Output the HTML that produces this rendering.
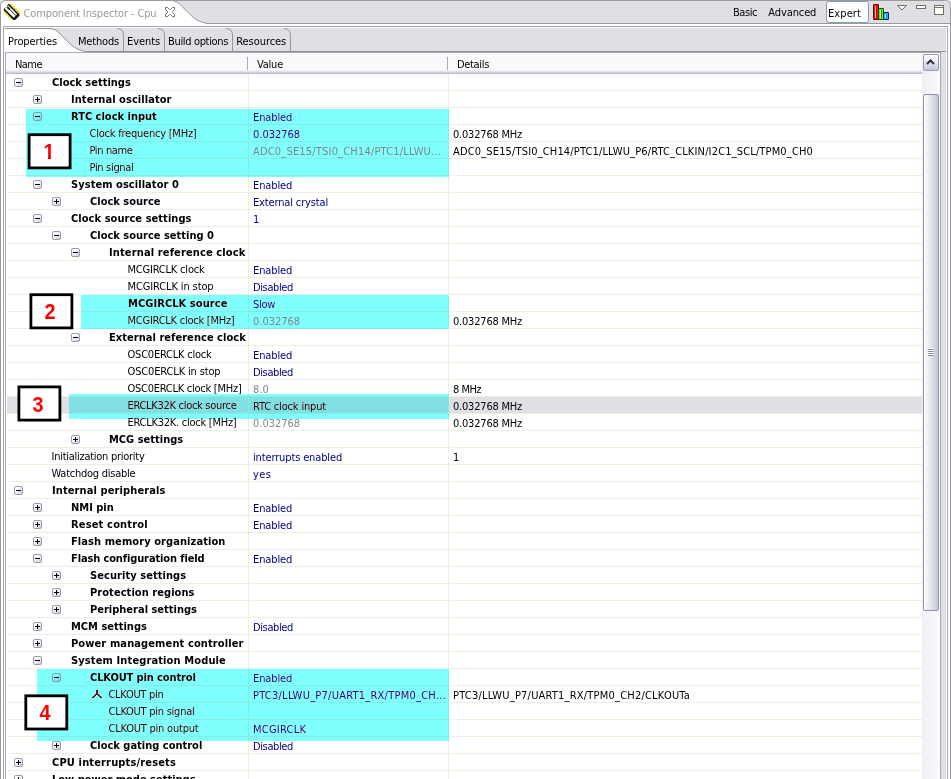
<!DOCTYPE html><html><head><meta charset="utf-8"><title>Component Inspector - Cpu</title><style>
*{margin:0;padding:0;box-sizing:border-box}
html,body{width:951px;height:779px;overflow:hidden;background:#fff}
body{position:relative;font-family:"DejaVu Sans Condensed","Liberation Sans",sans-serif;font-size:11px;color:#000;-webkit-font-smoothing:antialiased}
.a{position:absolute}
.t{position:absolute;white-space:nowrap;line-height:17px;height:17px}
.b{font-weight:bold}
.v{color:#000080}
.g{color:#868686}
.k{color:#000}
.hl{position:absolute;left:7px;width:915px;height:1px;background:#f0eee1}
.ex{position:absolute;width:9px;height:9px;border:1px solid #9a9bab;border-radius:2px;background:linear-gradient(135deg,#fff 30%,#c3cedb 100%)}
.ex i{position:absolute;left:1px;top:3px;width:5px;height:1px;background:#000}
.ex b{position:absolute;left:3px;top:1px;width:1px;height:5px;background:#000}
.cy{position:absolute;background:#80ffff;mix-blend-mode:darken}
.nb{position:absolute;width:44px;height:36px;padding:3px;color:#f00;font:bold 22px/31px "Liberation Sans",sans-serif;text-align:center}
.nb span{display:inline-block;transform:scaleX(.9);margin-left:-2px}
</style></head><body>
<svg class="a" style="left:0;top:0" width="951" height="779" viewBox="0 0 951 779">
<rect x="0" y="0" width="951" height="30" fill="#e3e3e7"/>
<path d="M0.5,800 V6.5 Q0.5,0.5 6.5,0.5 H944.5 Q950.5,0.5 950.5,6.5 V800 Z" fill="#fff" stroke="#9a9a9e"/>
<path d="M171,1 C175,0.8 177,1.8 179,3.5 L193,17.3 C197,20.5 201,22.3 207,23.5 H950 V7 Q950,1 944,1 Z" fill="#e0dfe3"/>
<path d="M171,0.5 C175,0.8 177,1.8 179,3.5 L193,17.3 C197,20.5 201,22.3 207,23.5 H950" fill="none" stroke="#9a9a9e"/>
<!-- inner folder border -->
<path d="M3.5,800 V26.5 H947.5 V800" fill="none" stroke="#a3a7ab"/>
<!-- tab strip background -->
<rect x="5" y="28" width="941" height="24" fill="#e0dfe3"/>
<rect x="941" y="52" width="5" height="727" fill="#e0dfe3"/>
<!-- selected tab -->
<path d="M5,28.5 H49.5 C53.5,28.8 55.5,29.8 57.5,31.5 L71.5,45.3 C75.5,48.5 79.5,50.3 85.5,51.5 V52 H5 Z" fill="#fff"/>
<path d="M5,28.5 H49.5 C53.5,28.8 55.5,29.8 57.5,31.5 L71.5,45.3 C75.5,48.5 79.5,50.3 85.5,51.5 H946" fill="none" stroke="#8f8f93"/>
<!-- unselected tab separators -->
<g fill="none" stroke="#98989c">
<path d="M117,28.5 Q123.5,29 123.5,35 V51"/>
<path d="M158,28.5 Q164.500,29 164.500,35 V51"/>
<path d="M226,28.5 Q232.500,29 232.500,35 V51"/>
<path d="M284,28.5 Q290.500,29 290.500,35 V51"/>
</g>
<!-- close X -->
<polygon transform="translate(165.5,7.500)" points="0,0 2,0 4,2 5,2 7,0 9,0 9,2 7,4 7,5 9,7 9,9 7,9 5,7 4,7 2,9 0,9 0,7 2,5 2,4 0,2" fill="#fff" stroke="#716f64"/>
<!-- view menu / min / max -->
<g fill="#fff" stroke="#716f64">
<path d="M897.5,5.500 H906.5 L902,10 Z"/>
<rect x="916.5" y="5.500" width="9" height="3"/>
<rect x="934.5" y="5.500" width="9" height="9"/>
<path d="M935,7.500 H943"/>
</g>
<!-- chart icon -->
<g>
<rect x="873" y="4" width="6" height="16" rx="1.200" fill="#780000"/><rect x="874" y="5" width="4" height="14" fill="#ff1010"/><rect x="875" y="6" width="1" height="12" fill="#ffc8c8"/><rect x="876" y="6" width="1" height="12" fill="#d80000"/>
<rect x="878" y="8" width="6" height="12" rx="1.200" fill="#0a4800"/><rect x="879" y="9" width="4" height="10" fill="#58f800"/><rect x="880" y="10" width="1" height="8" fill="#c8ffb0"/><rect x="881" y="10" width="1" height="8" fill="#10a000"/>
<rect x="883" y="12" width="6" height="8" rx="1.200" fill="#003058"/><rect x="884" y="13" width="4" height="6" fill="#28a8ff"/><rect x="885" y="14" width="1" height="4" fill="#c0e8ff"/><rect x="886" y="14" width="1" height="4" fill="#1088e8"/>
</g>
<!-- chip icon -->
<g>
<g fill="#e0e000">
<rect x="10" y="4" width="2.500" height="2"/><rect x="12" y="6" width="2.500" height="2"/><rect x="14" y="8" width="2.500" height="2"/><rect x="16" y="10" width="2.500" height="2"/><rect x="18" y="12" width="2.200" height="2"/>
<rect x="4" y="10" width="1.600" height="3.500"/><rect x="6" y="12" width="1.600" height="3.500"/><rect x="8" y="14" width="1.600" height="3.500"/><rect x="10" y="16" width="1.600" height="3.300"/><rect x="12" y="17.500" width="1.600" height="2.500"/>
</g>
<path d="M8.500,4.500 L19,15 L14.500,19.500 L4,9 Z" fill="#fff"/>
<path d="M4.300,8.800 L8.600,4.500" fill="none" stroke="#333" stroke-width="1" stroke-dasharray="1.200 0.800"/>
<path d="M8.300,4.300 L19,15" fill="none" stroke="#000" stroke-width="1.400"/>
<path d="M4,9.300 L14.300,19.600" fill="none" stroke="#05050f" stroke-width="1.600"/>
<path d="M14,19.300 L18.800,14.500" fill="none" stroke="#16161e" stroke-width="2.600"/>
<path d="M7.300,7 L9.800,9.500" fill="none" stroke="#222" stroke-width="1.800"/>
<path d="M9.500,9.200 L16,15.700" fill="none" stroke="#000" stroke-width="0.900"/>
</g>
</svg>
<div class="t" style="left:23.5px;top:5px;letter-spacing:-0.124px;color:#9a9a9a">Component Inspector - Cpu</div>
<div class="t" style="left:733px;top:4px;letter-spacing:-0.441px">Basic</div>
<div class="t" style="left:768.3px;top:4px;letter-spacing:-0.109px">Advanced</div>
<div class="a" style="left:826px;top:1px;width:43px;height:22px;border:1px solid #869cb2;border-radius:3px;background:#fff"></div>
<div class="t" style="left:828px;top:5px;letter-spacing:0.094px">Expert</div>
<div class="t" style="left:8px;top:33px;letter-spacing:-0.097px">Properties</div>
<div class="t" style="left:78px;top:33px;letter-spacing:-0.183px">Methods</div>
<div class="t" style="left:127px;top:33px;letter-spacing:-0.086px">Events</div>
<div class="t" style="left:168px;top:33px;letter-spacing:-0.341px">Build options</div>
<div class="t" style="left:236.2px;top:33px;letter-spacing:-0.052px">Resources</div>
<div class="a" style="left:5px;top:52px;width:936px;height:740px;border:1px solid #a5acb5;border-bottom:0"></div>
<div class="a" style="left:6px;top:53px;width:916px;height:21px;background:linear-gradient(#fafafd 0,#fafafd 17px,#f0f0f6 17px,#f0f0f6 18px,#e3e3ec 18px,#e3e3ec 19px,#d0d0de 19px,#d0d0de 20px,#bcbcd0 20px)"></div>
<div class="a" style="left:247px;top:57px;width:1px;height:13px;background:#a9a9b9"></div>
<div class="a" style="left:447px;top:57px;width:1px;height:13px;background:#a9a9b9"></div>
<div class="t" style="left:15px;top:56px;letter-spacing:-0.551px">Name</div>
<div class="t" style="left:257px;top:56px;letter-spacing:-0.219px">Value</div>
<div class="t" style="left:457px;top:56px;letter-spacing:-0.330px">Details</div>
<div class="a" style="left:7px;top:397px;width:915px;height:17px;background:#e0dfe3"></div>
<div class="hl" style="top:90px"></div>
<div class="hl" style="top:107px"></div>
<div class="hl" style="top:124px"></div>
<div class="hl" style="top:141px"></div>
<div class="hl" style="top:158px"></div>
<div class="hl" style="top:175px"></div>
<div class="hl" style="top:192px"></div>
<div class="hl" style="top:209px"></div>
<div class="hl" style="top:226px"></div>
<div class="hl" style="top:243px"></div>
<div class="hl" style="top:260px"></div>
<div class="hl" style="top:277px"></div>
<div class="hl" style="top:294px"></div>
<div class="hl" style="top:311px"></div>
<div class="hl" style="top:328px"></div>
<div class="hl" style="top:345px"></div>
<div class="hl" style="top:362px"></div>
<div class="hl" style="top:379px"></div>
<div class="hl" style="top:396px"></div>
<div class="hl" style="top:413px"></div>
<div class="hl" style="top:430px"></div>
<div class="hl" style="top:447px"></div>
<div class="hl" style="top:464px"></div>
<div class="hl" style="top:481px"></div>
<div class="hl" style="top:498px"></div>
<div class="hl" style="top:515px"></div>
<div class="hl" style="top:532px"></div>
<div class="hl" style="top:549px"></div>
<div class="hl" style="top:566px"></div>
<div class="hl" style="top:583px"></div>
<div class="hl" style="top:600px"></div>
<div class="hl" style="top:617px"></div>
<div class="hl" style="top:634px"></div>
<div class="hl" style="top:651px"></div>
<div class="hl" style="top:668px"></div>
<div class="hl" style="top:685px"></div>
<div class="hl" style="top:702px"></div>
<div class="hl" style="top:719px"></div>
<div class="hl" style="top:736px"></div>
<div class="hl" style="top:753px"></div>
<div class="hl" style="top:770px"></div>
<div class="a" style="left:248px;top:74px;width:1px;height:705px;background:#f0eee1"></div>
<div class="a" style="left:448px;top:74px;width:1px;height:705px;background:#f0eee1"></div>
<div class="ex" style="left:14px;top:78px"><i></i></div>
<div class="t b" style="left:52px;top:74px">Clock settings</div>
<div class="ex" style="left:33px;top:95px"><i></i><b></b></div>
<div class="t b" style="left:71px;top:91px;letter-spacing:0.056px">Internal oscillator</div>
<div class="ex" style="left:33px;top:112px"><i></i></div>
<div class="t b" style="left:71px;top:108px">RTC clock input</div>
<div class="t v" style="left:253px;top:109px;letter-spacing:-0.119px">Enabled</div>
<div class="t" style="left:89.5px;top:125px;letter-spacing:-0.223px">Clock frequency [MHz]</div>
<div class="t v" style="left:253px;top:126px;letter-spacing:-0.009px">0.032768</div>
<div class="t" style="left:453px;top:126px;letter-spacing:-0.203px">0.032768 MHz</div>
<div class="t" style="left:89.5px;top:142px;letter-spacing:-0.371px">Pin name</div>
<div class="t g" style="left:253px;top:143px;letter-spacing:0.183px">ADC0_SE15/TSI0_CH14/PTC1/LLWU...</div>
<div class="t" style="left:453px;top:143px;letter-spacing:0.150px">ADC0_SE15/TSI0_CH14/PTC1/LLWU_P6/RTC_CLKIN/I2C1_SCL/TPM0_CH0</div>
<div class="t" style="left:89.5px;top:159px;letter-spacing:-0.317px">Pin signal</div>
<div class="ex" style="left:33px;top:180px"><i></i></div>
<div class="t b" style="left:71px;top:176px;letter-spacing:0.056px">System oscillator 0</div>
<div class="t v" style="left:253px;top:177px;letter-spacing:-0.119px">Enabled</div>
<div class="ex" style="left:52px;top:197px"><i></i><b></b></div>
<div class="t b" style="left:90px;top:193px">Clock source</div>
<div class="t v" style="left:253px;top:194px;letter-spacing:-0.145px">External crystal</div>
<div class="ex" style="left:33px;top:214px"><i></i></div>
<div class="t b" style="left:71px;top:210px;letter-spacing:0.050px">Clock source settings</div>
<div class="t v" style="left:253px;top:211px;letter-spacing:1.703px">1</div>
<div class="ex" style="left:52px;top:231px"><i></i></div>
<div class="t b" style="left:90px;top:227px">Clock source setting 0</div>
<div class="ex" style="left:71px;top:248px"><i></i></div>
<div class="t b" style="left:109px;top:244px;letter-spacing:0.130px">Internal reference clock</div>
<div class="t" style="left:127.5px;top:261px;letter-spacing:-0.203px">MCGIRCLK clock</div>
<div class="t v" style="left:253px;top:262px;letter-spacing:-0.119px">Enabled</div>
<div class="t" style="left:127.5px;top:278px;letter-spacing:-0.123px">MCGIRCLK in stop</div>
<div class="t v" style="left:253px;top:279px;letter-spacing:-0.377px">Disabled</div>
<div class="t b" style="left:128px;top:295px;letter-spacing:0.071px">MCGIRCLK source</div>
<div class="t v" style="left:253px;top:296px;letter-spacing:-0.297px">Slow</div>
<div class="t" style="left:127.5px;top:312px;letter-spacing:-0.245px">MCGIRCLK clock [MHz]</div>
<div class="t g" style="left:253px;top:313px;letter-spacing:-0.009px">0.032768</div>
<div class="t" style="left:453px;top:313px;letter-spacing:-0.203px">0.032768 MHz</div>
<div class="ex" style="left:71px;top:333px"><i></i></div>
<div class="t b" style="left:109px;top:329px;letter-spacing:0.043px">External reference clock</div>
<div class="t" style="left:127.5px;top:346px;letter-spacing:-0.223px">OSC0ERCLK clock</div>
<div class="t v" style="left:253px;top:347px;letter-spacing:-0.119px">Enabled</div>
<div class="t" style="left:127.5px;top:363px;letter-spacing:-0.144px">OSC0ERCLK in stop</div>
<div class="t v" style="left:253px;top:364px;letter-spacing:-0.377px">Disabled</div>
<div class="t" style="left:127.5px;top:380px;letter-spacing:-0.256px">OSC0ERCLK clock [MHz]</div>
<div class="t g" style="left:253px;top:381px;letter-spacing:0.089px">8.0</div>
<div class="t" style="left:453px;top:381px;letter-spacing:-0.525px">8 MHz</div>
<div class="t" style="left:127.5px;top:397px;letter-spacing:-0.293px">ERCLK32K clock source</div>
<div class="t k" style="left:253px;top:398px;letter-spacing:-0.170px">RTC clock input</div>
<div class="t" style="left:453px;top:398px;letter-spacing:-0.203px">0.032768 MHz</div>
<div class="t" style="left:127.5px;top:414px;letter-spacing:-0.254px">ERCLK32K. clock [MHz]</div>
<div class="t g" style="left:253px;top:415px;letter-spacing:-0.009px">0.032768</div>
<div class="t" style="left:453px;top:415px;letter-spacing:-0.203px">0.032768 MHz</div>
<div class="ex" style="left:71px;top:435px"><i></i><b></b></div>
<div class="t b" style="left:109px;top:431px">MCG settings</div>
<div class="t" style="left:51.5px;top:448px;letter-spacing:-0.270px">Initialization priority</div>
<div class="t v" style="left:253px;top:449px;letter-spacing:-0.136px">interrupts enabled</div>
<div class="t" style="left:453px;top:449px;letter-spacing:1.703px">1</div>
<div class="t" style="left:51.5px;top:465px;letter-spacing:-0.247px">Watchdog disable</div>
<div class="t v" style="left:253px;top:466px;letter-spacing:0.464px">yes</div>
<div class="ex" style="left:14px;top:486px"><i></i></div>
<div class="t b" style="left:52px;top:482px;letter-spacing:0.105px">Internal peripherals</div>
<div class="ex" style="left:33px;top:503px"><i></i><b></b></div>
<div class="t b" style="left:71px;top:499px">NMI pin</div>
<div class="t v" style="left:253px;top:500px;letter-spacing:-0.119px">Enabled</div>
<div class="ex" style="left:33px;top:520px"><i></i><b></b></div>
<div class="t b" style="left:71px;top:516px;letter-spacing:0.167px">Reset control</div>
<div class="t v" style="left:253px;top:517px;letter-spacing:-0.119px">Enabled</div>
<div class="ex" style="left:33px;top:537px"><i></i><b></b></div>
<div class="t b" style="left:71px;top:533px;letter-spacing:0.083px">Flash memory organization</div>
<div class="ex" style="left:33px;top:554px"><i></i></div>
<div class="t b" style="left:71px;top:550px;letter-spacing:-0.125px">Flash configuration field</div>
<div class="t v" style="left:253px;top:551px;letter-spacing:-0.119px">Enabled</div>
<div class="ex" style="left:52px;top:571px"><i></i><b></b></div>
<div class="t b" style="left:90px;top:567px;letter-spacing:0.062px">Security settings</div>
<div class="ex" style="left:52px;top:588px"><i></i><b></b></div>
<div class="t b" style="left:90px;top:584px;letter-spacing:0.059px">Protection regions</div>
<div class="ex" style="left:52px;top:605px"><i></i><b></b></div>
<div class="t b" style="left:90px;top:601px">Peripheral settings</div>
<div class="ex" style="left:33px;top:622px"><i></i><b></b></div>
<div class="t b" style="left:71px;top:618px">MCM settings</div>
<div class="t v" style="left:253px;top:619px;letter-spacing:-0.377px">Disabled</div>
<div class="ex" style="left:33px;top:639px"><i></i><b></b></div>
<div class="t b" style="left:71px;top:635px;letter-spacing:0.115px">Power management controller</div>
<div class="ex" style="left:33px;top:656px"><i></i></div>
<div class="t b" style="left:71px;top:652px;letter-spacing:0.125px">System Integration Module</div>
<div class="ex" style="left:52px;top:673px"><i></i></div>
<div class="t b" style="left:90px;top:669px;letter-spacing:-0.118px">CLKOUT pin control</div>
<div class="t v" style="left:253px;top:670px;letter-spacing:-0.119px">Enabled</div>
<svg class="a" style="left:92px;top:690px" width="10" height="8" viewBox="0 0 10 8" shape-rendering="crispEdges"><path d="M4,0h2v4h1v1h1v1h1v1h1v1h-2v-1h-1v-1h-1v-1h-2v1h-1v1h-1v1h-2v-1h1v-1h1v-1h1v-1h1z" fill="#800000"/></svg>
<div class="t" style="left:108.5px;top:686px;letter-spacing:-0.296px">CLKOUT pin</div>
<div class="t v" style="left:253px;top:687px;letter-spacing:0.243px">PTC3/LLWU_P7/UART1_RX/TPM0_CH...</div>
<div class="t" style="left:453px;top:687px;letter-spacing:0.205px">PTC3/LLWU_P7/UART1_RX/TPM0_CH2/CLKOUTa</div>
<div class="t" style="left:108.5px;top:703px;letter-spacing:-0.251px">CLKOUT pin signal</div>
<div class="t" style="left:108.5px;top:720px;letter-spacing:-0.216px">CLKOUT pin output</div>
<div class="t v" style="left:253px;top:721px;letter-spacing:0.250px">MCGIRCLK</div>
<div class="ex" style="left:52px;top:741px"><i></i><b></b></div>
<div class="t b" style="left:90px;top:737px">Clock gating control</div>
<div class="t v" style="left:253px;top:738px;letter-spacing:-0.377px">Disabled</div>
<div class="ex" style="left:14px;top:758px"><i></i><b></b></div>
<div class="t b" style="left:52px;top:754px;letter-spacing:0.150px">CPU interrupts/resets</div>
<div class="ex" style="left:14px;top:775px"><i></i><b></b></div>
<div class="t b" style="left:52px;top:771px">Low power mode settings</div>
<div class="a" style="left:922px;top:53px;width:18px;height:726px;background:linear-gradient(90deg,#eeeef4,#fcfcfe)"></div>
<div class="a" style="left:923px;top:54px;width:16px;height:17px;border:1px solid #9a9bb0;border-radius:2px;background:linear-gradient(#fff,#e6e6f0 50%,#c4c5d8)"></div>
<svg class="a" style="left:922px;top:53px" width="18" height="20" viewBox="0 0 18 20"><path d="M5,11 L8.500,7.500 L12,11" fill="none" stroke="#303038" stroke-width="2"/></svg>
<div class="a" style="left:923px;top:94px;width:16px;height:517px;border:1px solid #9293a8;border-radius:2px;background:linear-gradient(90deg,#fff,#e2e2ec 50%,#c2c3d6)"></div>
<svg class="a" style="left:922px;top:340px" width="18" height="24" viewBox="0 0 18 24"><g stroke="#8c8ea6"><path d="M6,9.500h6M6,11.500h6M6,13.500h6M6,15.500h6"/></g><g stroke="#fff"><path d="M6,8.500h6M6,10.500h6M6,12.500h6M6,14.500h6"/></g></svg>
<div class="cy" style="left:26px;top:109px;width:423px;height:68px"></div>
<div class="cy" style="left:81px;top:295px;width:368px;height:34px"></div>
<div class="cy" style="left:69px;top:394px;width:380px;height:25px"></div>
<div class="cy" style="left:37px;top:669px;width:412px;height:72px"></div>
<svg class="a" style="left:0;top:0" width="100" height="779" viewBox="0 0 100 779">
<rect x="29.10" y="134.70" width="41" height="33.200" fill="#fff" stroke="#000" stroke-width="2.800"/>
<rect x="30.90" y="294.70" width="41" height="33.200" fill="#fff" stroke="#000" stroke-width="2.800"/>
<rect x="18.90" y="386.90" width="41" height="33.200" fill="#fff" stroke="#000" stroke-width="2.800"/>
<rect x="25.80" y="695.80" width="41" height="33.200" fill="#fff" stroke="#000" stroke-width="2.800"/>
</svg>
<div class="nb" style="left:27.7px;top:133.3px"><span>1</span><i style="position:absolute;left:15px;top:22.200px;width:5.600px;height:5px;background:#fff"></i><i style="position:absolute;left:23.700px;top:22.200px;width:5px;height:5px;background:#fff"></i></div>
<div class="nb" style="left:29.5px;top:293.3px"><span>2</span></div>
<div class="nb" style="left:17.5px;top:385.5px"><span>3</span></div>
<div class="nb" style="left:24.4px;top:694.4px"><span>4</span></div>
</body></html>
